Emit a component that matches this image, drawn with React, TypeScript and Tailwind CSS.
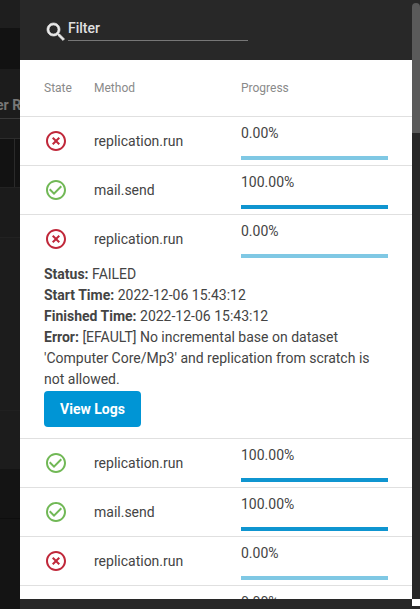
const font = { fontFamily: 'Roboto, sans-serif' };

function Failed() {
  return (
    <svg width="24" height="24" viewBox="0 0 24 24" className="block" fill="#c0283a">
      <path d="M14.59 8L12 10.59 9.41 8 8 9.41 10.59 12 8 14.59 9.41 16 12 13.41 14.59 16 16 14.59 13.41 12 16 9.41 14.59 8zM12 2C6.47 2 2 6.47 2 12s4.47 10 10 10 10-4.47 10-10S17.53 2 12 2zm0 18c-4.41 0-8-3.59-8-8s3.59-8 8-8 8 3.59 8 8-3.59 8-8 8z" />
    </svg>
  );
}
function Success() {
  return (
    <svg width="24" height="24" viewBox="0 0 24 24" className="block" fill="#71b856">
      <path d="M16.59 7.58L10 14.17l-3.59-3.58L5 12l5 5 8-8zM12 2C6.48 2 2 6.48 2 12s4.48 10 10 10 10-4.48 10-10S17.52 2 12 2zm0 18c-4.42 0-8-3.58-8-8s3.58-8 8-8 8 3.58 8 8-3.58 8-8 8z" />
    </svg>
  );
}

function Row({ ok, method, last = false }: { ok: boolean; method: string; last?: boolean }) {
  return (
    <div className={`flex h-[49px] ${last ? '' : 'border-b border-[#e0e0e0]'}`}>
      <div className="w-[74px] pl-6 pt-[12px] shrink-0">{ok ? <Success /> : <Failed />}</div>
      <div className="w-[147px] pt-[14px] text-[14px] leading-[20px] text-[#444444] shrink-0">{method}</div>
      <div className="w-[147px] shrink-0 pt-[6px]">
        <div className="text-[14px] leading-[20px] text-[#444444]">{ok ? '100.00%' : '0.00%'}</div>
        <div className={`mt-[13px] h-1 ${ok ? 'bg-[#0f95d0]' : 'bg-[#7fc8e4]'}`} />
      </div>
    </div>
  );
}

export default function App() {
  return (
    <div className="relative flex w-[420px] h-[609px] overflow-hidden bg-[#161616]" style={font}>
      <div className="w-5 shrink-0 flex flex-col">
        <div className="h-[28px] bg-[#1e1e1e]" />
        <div className="h-[41px] bg-[#121212]" />
        <div className="h-[50px] bg-[#1c1c1c] border-b border-[#3a3a3a] overflow-hidden whitespace-nowrap pt-[28px] text-[14px] leading-[16px] font-bold text-[#777777]"><span className="block -ml-[4px]">er R</span></div>
        <div className="h-[20px] bg-[#1c1c1c] border-b border-[#2c2c2c]" />
        <div className="h-[49px] bg-[#121212] border-b border-[#222222] pl-[14px]"><div className="w-px h-full bg-[#2a2a2a]" /></div>
        <div className="h-[50px] bg-[#1b1b1b] border-b border-[#222222]" />
        <div className="h-[173px] bg-[#1c1c1c] border-b border-[#202020]" />
        <div className="h-[58px] bg-[#1c1c1c]" />
        <div className="h-[50px] bg-[#141414] border-b border-[#0e0e0e]" />
        <div className="flex-1 bg-[#141414]" />
      </div>
      <div className="flex-1 flex flex-col bg-[#282828]">
        <div className="h-[60px] shrink-0 flex items-start pl-6 pt-5">
          <svg width="24" height="24" viewBox="0 0 24 24" className="block shrink-0" fill="#e8e8e8" stroke="#e8e8e8" strokeWidth="0.7">
            <path d="M15.5 14h-.79l-.28-.27C15.41 12.59 16 11.11 16 9.5 16 5.91 13.09 3 9.5 3S3 5.91 3 9.5 5.91 16 9.5 16c1.61 0 3.09-.59 4.23-1.57l.27.28v.79l5 4.99L20.49 19l-4.99-5zm-6 0C7.01 14 5 11.99 5 9.5S7.01 5 9.5 5 14 7.01 14 9.5 11.99 14 9.5 14z" />
          </svg>
          <div className="w-[180px] h-[23px] -mt-[2px] border-b border-[#777777] text-[14px] leading-[20px] font-medium text-[#e0e0e0]">Filter</div>
        </div>
        <div className="flex flex-1 min-h-0">
          <div className="w-[392px] h-[539px] bg-white overflow-hidden shrink-0">
            <div className="flex h-[57px] border-b border-[#e0e0e0] text-[12px] leading-[16px] text-[#8a8a8a] pt-[20px]">
              <div className="w-[74px] pl-6">State</div>
              <div className="w-[147px]">Method</div>
              <div>Progress</div>
            </div>
            <Row ok={false} method="replication.run" />
            <Row ok={true} method="mail.send" />
            <div className="border-b border-[#e0e0e0] h-[224px]">
              <Row ok={false} method="replication.run" last />
              <div className="px-6 text-[14px] leading-[21px] text-[#444444]">
                <div><b className="font-bold">Status:</b> FAILED</div>
                <div><b className="font-bold">Start Time:</b> 2022-12-06 15:43:12</div>
                <div><b className="font-bold">Finished Time:</b> 2022-12-06 15:43:12</div>
                <div className="w-[344px]"><b className="font-bold">Error:</b> [EFAULT] No incremental base on dataset 'Computer Core/Mp3' and replication from scratch is not allowed.</div>
                <div className="mt-px w-[97px] h-9 rounded bg-[#0095d5] text-white font-bold flex items-center justify-center">View Logs</div>
              </div>
            </div>
            <Row ok={true} method="replication.run" />
            <Row ok={true} method="mail.send" />
            <Row ok={false} method="replication.run" />
            <div className="flex pt-[6px] text-[14px] leading-[20px] text-[#444444]"><div className="w-[221px]" />0.00%</div>
          </div>
          <div className="flex-1" />
        </div>
        <div className="h-[10px] shrink-0" />
      </div>
      <div className="absolute right-0 top-[3px] w-2 h-[130px] rounded-t-sm bg-[#5a5a5a]" />
      <div className="absolute right-0 bottom-[3px] w-2 h-[7px] bg-white" />
    </div>
  );
}
